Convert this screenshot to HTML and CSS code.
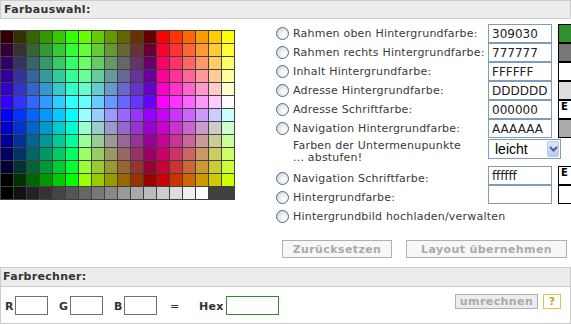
FILE: index.html
```html
<!DOCTYPE html>
<html lang="de">
<head>
    <meta charset="UTF-8">
    <title>Farbauswahl</title>
    <link rel="stylesheet" href="styles.css">
</head>
<body>
    <div class="panel-head top-head">Farbauswahl:</div>
    <div class="picker">
        <div class="palette" id="palette"></div>
        <div class="labels">
            <label class="opt"><span class="radio"></span>Rahmen oben Hintergrundfarbe:</label>
            <label class="opt"><span class="radio"></span>Rahmen rechts Hintergrundfarbe:</label>
            <label class="opt"><span class="radio"></span>Inhalt Hintergrundfarbe:</label>
            <label class="opt"><span class="radio"></span>Adresse Hintergrundfarbe:</label>
            <label class="opt"><span class="radio"></span>Adresse Schriftfarbe:</label>
            <label class="opt"><span class="radio"></span>Navigation Hintergrundfarbe:</label>
            <div class="note">Farben der Untermenupunkte<br>... abstufen!</div>
            <label class="opt"><span class="radio"></span>Navigation Schriftfarbe:</label>
            <label class="opt"><span class="radio"></span>Hintergrundfarbe:</label>
            <label class="opt"><span class="radio"></span>Hintergrundbild hochladen/verwalten</label>
        </div>
        <div class="fields">
            <input class="hex" value="309030">
            <input class="hex" value="777777">
            <input class="hex" value="FFFFFF">
            <input class="hex" value="DDDDDD">
            <input class="hex" value="000000">
            <input class="hex" value="AAAAAA">
            <div class="select">
                <span>leicht</span>
                <span class="drop">
                    <svg width="9" height="6" viewBox="0 0 9 6"><path d="M1 1 L4.5 4.5 L8 1" fill="none" stroke="#4d6185" stroke-width="2"/></svg>
                </span>
            </div>
            <input class="hex gap" value="ffffff">
            <input class="hex" value="">
        </div>
        <div class="previews">
            <span class="swatch" style="background:#309030"></span>
            <span class="swatch" style="background:#777777"></span>
            <span class="swatch" style="background:#ffffff"></span>
            <span class="swatch" style="background:#dddddd"></span>
            <span class="swatch">E</span>
            <span class="swatch" style="background:#aaaaaa"></span>
            <span class="swatch gap">E</span>
            <span class="swatch"></span>
        </div>
    </div>
    <div class="actions">
        <button class="btn reset">Zurücksetzen</button>
        <button class="btn apply">Layout übernehmen</button>
    </div>

    <div class="calc">
        <div class="panel-head">Farbrechner:</div>
        <div class="calc-body">
            <span class="lbl l-r">R</span><input class="num">
            <span class="lbl l-g">G</span><input class="num">
            <span class="lbl l-b">B</span><input class="num">
            <span class="eq">=</span>
            <span class="lbl l-hex">Hex</span><input class="hexout">
            <button class="btn convert">umrechnen</button>
            <span class="help">?</span>
        </div>
    </div>

    <script>
        const steps = ['00', '33', '66', '99', 'CC', 'FF'];
        const palette = document.getElementById('palette');

        function addCell(color) {
            const cell = document.createElement('span');
            cell.className = 'cell';
            cell.style.background = '#' + color;
            palette.appendChild(cell);
        }

        for (let row = 0; row < 12; row++) {
            const top = row < 6;
            const blue = top ? steps[row] : steps[11 - row];
            const reds = top ? ['33', '66', 'FF'] : ['00', '99', 'CC'];
            for (let col = 0; col < 18; col++) {
                const block = Math.floor(col / 6);
                const k = col % 6;
                const green = block === 1 ? steps[5 - k] : steps[k];
                addCell(reds[block] + green + blue);
            }
        }

        const greys = '0123456789ABCDEF';
        for (let i = 0; i < 16; i++) {
            addCell(greys[i] + greys[i] + greys[i] + greys[i] + greys[i] + greys[i]);
        }
    </script>
</body>
</html>
```

FILE: styles.css
```css
* {
    box-sizing: border-box;
}
body {
    margin: 0;
    width: 571px;
    overflow: hidden;
    font-family: 'DejaVu Sans', Verdana, sans-serif;
    font-size: 11px;
    color: #333;
    background: #fff;
}
.panel-head {
    height: 19px;
    line-height: 17px;
    padding-left: 3px;
    border: 1px solid #ccc;
    background: #ececec;
    font-weight: bold;
    letter-spacing: 0.3px;
    color: #333;
}
.top-head {
    width: 571px;
}
.picker {
    display: flex;
    margin-top: 5px;
}
.palette {
    display: grid;
    grid-template-columns: repeat(18, 12px);
    grid-auto-rows: 12px;
    gap: 1px;
    padding: 1px;
    width: 235px;
    height: 170px;
    margin-top: 6px;
    background: #404040;
}
.cell {
    display: block;
}
.labels {
    width: 212px;
    margin-left: 41px;
    color: #3a3a3a;
}
.opt {
    display: flex;
    align-items: center;
    height: 19px;
    letter-spacing: 0.2px;
    white-space: nowrap;
}
.radio {
    width: 13px;
    height: 13px;
    margin-right: 4px;
    border: 1px solid #4f6c8c;
    border-radius: 50%;
    background: radial-gradient(circle at 65% 65%, #ffffff 0%, #f2f2f2 35%, #d4d4d4 80%);
    flex: none;
}
.note {
    height: 31px;
    padding: 2px 0 0 17px;
    line-height: 12px;
    letter-spacing: 0.2px;
}
.fields {
    display: flex;
    flex-direction: column;
    width: 64px;
}
.hex {
    width: 64px;
    height: 19px;
    padding: 0 2px 0 3px;
    border: 1px solid #7f9db9;
    font-family: 'DejaVu Sans', Verdana, sans-serif;
    font-size: 12px;
    color: #222;
    background: #fff;
    outline: none;
}
.hex.gap {
    margin-top: 7px;
}
.select {
    display: flex;
    align-items: center;
    justify-content: space-between;
    width: 73px;
    height: 20px;
    margin-top: 1px;
    padding: 0 1px 0 6px;
    border: 1px solid #7f9db9;
    background: #fff;
    font-family: 'Liberation Sans', Arial, sans-serif;
    font-size: 14px;
    color: #000;
}
.drop {
    display: flex;
    align-items: center;
    justify-content: center;
    width: 12px;
    height: 16px;
    border: 1px solid #b8c8f0;
    border-radius: 2px;
    background: linear-gradient(#dce6fd, #b9cbf8);
}
.previews {
    display: flex;
    flex-direction: column;
    margin-left: 6px;
}
.swatch {
    display: block;
    width: 15px;
    height: 19px;
    border: 1px solid #000;
    background: #fff;
    padding-left: 2px;
    font-size: 10px;
    font-weight: bold;
    line-height: 11px;
    color: #000;
}
.swatch.gap {
    margin-top: 28px;
}
.actions {
    display: flex;
    gap: 14px;
    margin-top: 14px;
    padding-left: 282px;
}
.btn {
    height: 18px;
    padding: 0;
    border: 1px solid #b0b0b0;
    background: #f7f7f7;
    font-family: 'DejaVu Sans', Verdana, sans-serif;
    font-size: 11px;
    font-weight: bold;
    letter-spacing: 0.4px;
    color: #aaa;
}
.reset {
    width: 110px;
}
.apply {
    width: 161px;
}
.calc {
    width: 571px;
    height: 57px;
    margin-top: 9px;
    border: 1px solid #ccc;
}
.calc .panel-head {
    border: none;
    border-bottom: 1px solid #ccc;
    padding-left: 2px;
}
.calc-body {
    display: flex;
    align-items: center;
    height: 36px;
    padding-left: 4px;
}
.lbl {
    font-weight: bold;
    padding-top: 2px;
}
.l-r {
    width: 10px;
}
.l-g {
    width: 11px;
    margin-left: 11px;
}
.l-b {
    width: 10px;
    margin-left: 11px;
}
.l-hex {
    width: 27px;
    margin-left: 22px;
    letter-spacing: 0.3px;
}
.eq {
    width: 7px;
    margin-left: 13px;
    padding-top: 2px;
}
.num,
.hexout {
    height: 19px;
    padding: 0 3px;
    border: 1px solid #6f6f6f;
    background: #fff;
    outline: none;
}
.num {
    width: 33px;
}
.hexout {
    width: 53px;
    border-color: #2e8b2e;
}
.convert {
    width: 83px;
    height: 15px;
    margin-left: auto;
    margin-top: -7px;
    background: #ececec;
    line-height: 12px;
}
.help {
    width: 18px;
    height: 15px;
    margin: -7px 9px 0 5px;
    border: 1px solid #e2c253;
    text-align: center;
    line-height: 13px;
    font-weight: bold;
    color: #d0a020;
}
```
